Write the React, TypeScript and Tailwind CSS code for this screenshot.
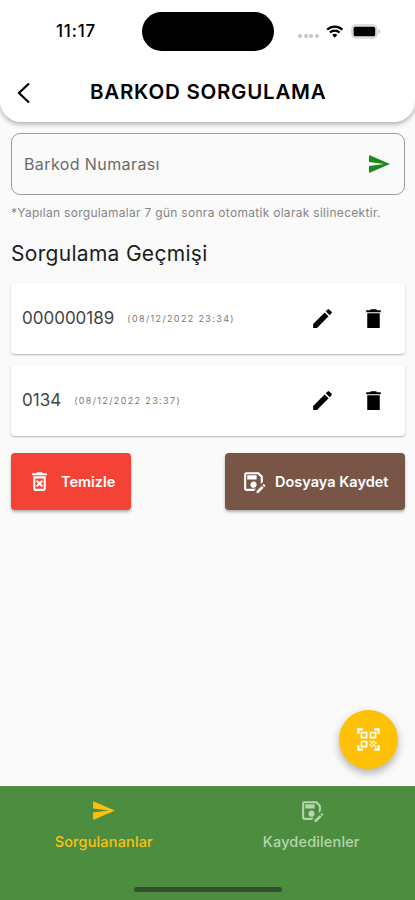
import { useState } from 'react'
import { MdSend, MdEdit, MdOutlineDeleteForever, MdOutlineSaveAs, MdQrCodeScanner } from 'react-icons/md'

const history = [
    { id: 1, code: '000000189', date: '(08/12/2022 23:34)' },
    { id: 2, code: '0134', date: '(08/12/2022 23:37)' },
]

const StatusBar = () => {
    return (
        <div className="flex h-[62px] items-center pl-14 pt-px">
            <span className="w-[86px] text-[17px] font-medium tracking-[0.8px]">11:17</span>
            <div className="h-[39px] w-[132px] rounded-full bg-black"></div>
            <div className="ml-6 flex w-[83px] items-center">
                <div className="mt-2 flex gap-[1.5px]">
                    <i className="size-1 rounded-full bg-[#c6c6c6]"></i>
                    <i className="size-1 rounded-full bg-[#c6c6c6]"></i>
                    <i className="size-1 rounded-full bg-[#c6c6c6]"></i>
                    <i className="size-1 rounded-full bg-[#c6c6c6]"></i>
                </div>
                <svg className="ml-[7px] h-[13px] w-[18px]" viewBox="0 0 18 13">
                    <path d="M1.200 4.600a11.200 11.200 0 0 1 15.600 0M4 7.600a7.200 7.200 0 0 1 10 0" fill="none" stroke="#000" strokeWidth="2.200" />
                    <path d="M9 12.800 6.400 10.100a3.800 3.800 0 0 1 5.200 0z" />
                </svg>
                <svg className="ml-[8px] h-[15px] w-[30px] shrink-0" viewBox="0 0 30 15">
                    <rect x="0.9" y="0.9" width="25" height="13.2" rx="4" fill="#e8e8e8" stroke="#d6d6d6" strokeWidth="1.5" />
                    <rect x="2.6" y="2.7" width="21.6" height="9.6" rx="1.6" />
                    <path d="M27.3 5v5c1.2-.4 2-1.400 2-2.500S28.500 5.400 27.300 5z" fill="#cfcfcf" />
                </svg>
            </div>
        </div>
    )
}

function HistoryItem({ code, date }: { code: string, date: string }) {
    return (
        <div className="flex h-[71px] items-center rounded-[4px] bg-white pl-[11px] pr-[19px] shadow-[0_1px_2px_rgba(0,0,0,0.28)]">
            <span className="pt-px text-[17px] text-[#444]">{code}</span>
            <span className="ml-[13px] text-[9px] tracking-[1.36px] text-[#777]">{date}</span>
            <button type="button" className="ml-auto">
                <MdEdit size={25} />
            </button>
            <button type="button" className="ml-[26px]">
                <svg className="size-[25px]" viewBox="0 0 24 24">
                    <path d="M6 21h12V7H6v14zM19 4h-3.500l-1-1h-5l-1 1H5v2h14V4z" />
                </svg>
            </button>
        </div>
    )
}

function App() {
    const [tab, setTab] = useState('queried')

    return (
        <div className="relative flex h-[900px] w-full flex-col bg-[#fafafa] font-['Inter',sans-serif] text-black">
            <header className="h-[122px] rounded-b-[21px] bg-white shadow-[0_2px_5px_rgba(0,0,0,0.32)]">
                <StatusBar />
                <div className="flex h-[60px] items-center pt-px">
                    <svg className="ml-[17px] h-[22px] w-[14px]" viewBox="0 0 14 22">
                        <path d="M12 1.500 2 11l10 9.500" fill="none" stroke="#000" strokeWidth="2.200" />
                    </svg>
                    <h1 className="ml-[59px] text-[20.5px] font-semibold tracking-[0.75px]">BARKOD SORGULAMA</h1>
                </div>
            </header>

            <main className="flex-1 pl-[11px] pr-[10px] pt-[11px]">
                <div className="flex h-[62px] items-center justify-between rounded-[9px] border border-[#9c9c9c] pl-3 pr-[13px]">
                    <span className="text-[16px] tracking-[0.4px] text-[#6b6b6b]">Barkod Numarası</span>
                    <MdSend size={24} className="text-[#1b8a1b]" />
                </div>
                <p className="mt-[9px] whitespace-nowrap text-[12px] leading-[18px] tracking-[0.29px] text-[#858585]">
                    *Yapılan sorgulamalar 7 gün sonra otomatik olarak silinecektir.
                </p>
                <h2 className="mt-[17px] text-[21px] leading-[30px] tracking-[0.3px] text-[#1c1c1c]">Sorgulama Geçmişi</h2>

                <div className="mt-[14px] flex flex-col gap-[11px]">
                    {history.map((item) => (
                        <HistoryItem key={item.id} code={item.code} date={item.date} />
                    ))}
                </div>

                <div className="mt-[17px] flex justify-between text-[14.5px] font-semibold text-white">
                    <button
                        type="button"
                        className="flex h-[57px] w-[120px] items-center rounded-[4px] bg-[#f44336] pl-4 shadow-[0_2px_3px_rgba(0,0,0,0.3)]">
                        <MdOutlineDeleteForever size={25} />
                        <span className="ml-[9px]">Temizle</span>
                    </button>
                    <button
                        type="button"
                        className="flex h-[57px] w-[180px] items-center rounded-[4px] bg-[#795548] pl-4 shadow-[0_2px_3px_rgba(0,0,0,0.3)]">
                        <MdOutlineSaveAs size={25} />
                        <span className="ml-[9px] whitespace-nowrap">Dosyaya Kaydet</span>
                    </button>
                </div>
            </main>

            <button
                type="button"
                className="absolute bottom-[131px] right-[17px] flex size-[59px] items-center justify-center rounded-full bg-[#ffc107] text-white shadow-[0_4px_8px_rgba(0,0,0,0.3)]">
                <MdQrCodeScanner size={27} />
            </button>

            <nav className="relative flex h-[114px] bg-[#4c8d40] pt-3 text-[14.5px] font-medium tracking-[0.15px]">
                <button
                    type="button"
                    className={`flex flex-1 flex-col items-center ${tab === 'queried' ? 'text-[#fdc010]' : 'text-[#b5d6ad]'}`}
                    onClick={() => setTab('queried')}>
                    <MdSend size={25} />
                    <span className="mt-2">Sorgulananlar</span>
                </button>
                <button
                    type="button"
                    className={`flex flex-1 flex-col items-center ${tab === 'saved' ? 'text-[#fdc010]' : 'text-[#b5d6ad]'}`}
                    onClick={() => setTab('saved')}>
                    <MdOutlineSaveAs size={25} />
                    <span className="mt-2">Kaydedilenler</span>
                </button>
                <div className="absolute bottom-[8px] left-[134px] h-[5px] w-[148px] rounded-full bg-[#34502f]"></div>
            </nav>
        </div>
    )
}

export default App
